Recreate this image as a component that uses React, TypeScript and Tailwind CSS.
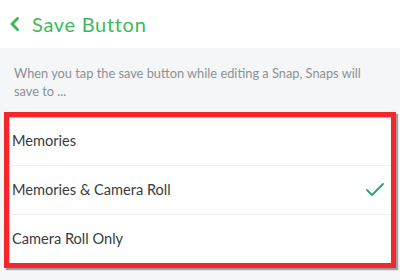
const options = [
  { label: 'Memories', selected: false },
  { label: 'Memories & Camera Roll', selected: true },
  { label: 'Camera Roll Only', selected: false },
];

export default function App() {
  return (
    <div className="w-[400px] h-[280px] bg-[#f5f6f8] overflow-hidden" style={{ fontFamily: 'Lato, "Open Sans", sans-serif' }}>
      <div className="h-[48px] bg-white flex items-center pl-[9px] gap-[11px]">
        <svg width="12" height="16" viewBox="0 0 12 16" fill="none" stroke="#3cb95c" strokeWidth="3" strokeLinecap="round" strokeLinejoin="round">
          <path d="M8.5 2.5L3 8l5.5 5.5" />
        </svg>
        <span className="text-[20px] text-[#3cb95c] tracking-[0.7px]">Save Button</span>
      </div>

      <p className="pt-[16px] pl-[14px] pr-[16px] text-[12.8px] leading-[18px] text-[#8c9096]">
        When you tap the save button while editing a Snap, Snaps will save to ...
      </p>

      <div className="mt-[12px] mx-[4px] w-[392px] border-[5px] border-[#f4262b] bg-white shadow-[2px_2px_1px_rgba(0,0,0,0.35),inset_1px_1px_1px_rgba(0,0,0,0.25)]">
        {options.map((o, i) => (
          <div
            key={o.label}
            className={`h-[48px] flex items-center justify-between pl-[3px] pr-[6px] ${i < options.length - 1 ? 'box-content border-b border-[#f0f1f3]' : ''}`}
          >
            <span className="text-[14.6px] text-[#3a3c40]">{o.label}</span>
            {o.selected && (
              <svg width="20" height="16" viewBox="0 0 20 16" fill="none" stroke="#2aa784" strokeWidth="2" strokeLinecap="round" strokeLinejoin="round">
                <path d="M2 8l5 5L18 2" />
              </svg>
            )}
          </div>
        ))}
      </div>
    </div>
  );
}
